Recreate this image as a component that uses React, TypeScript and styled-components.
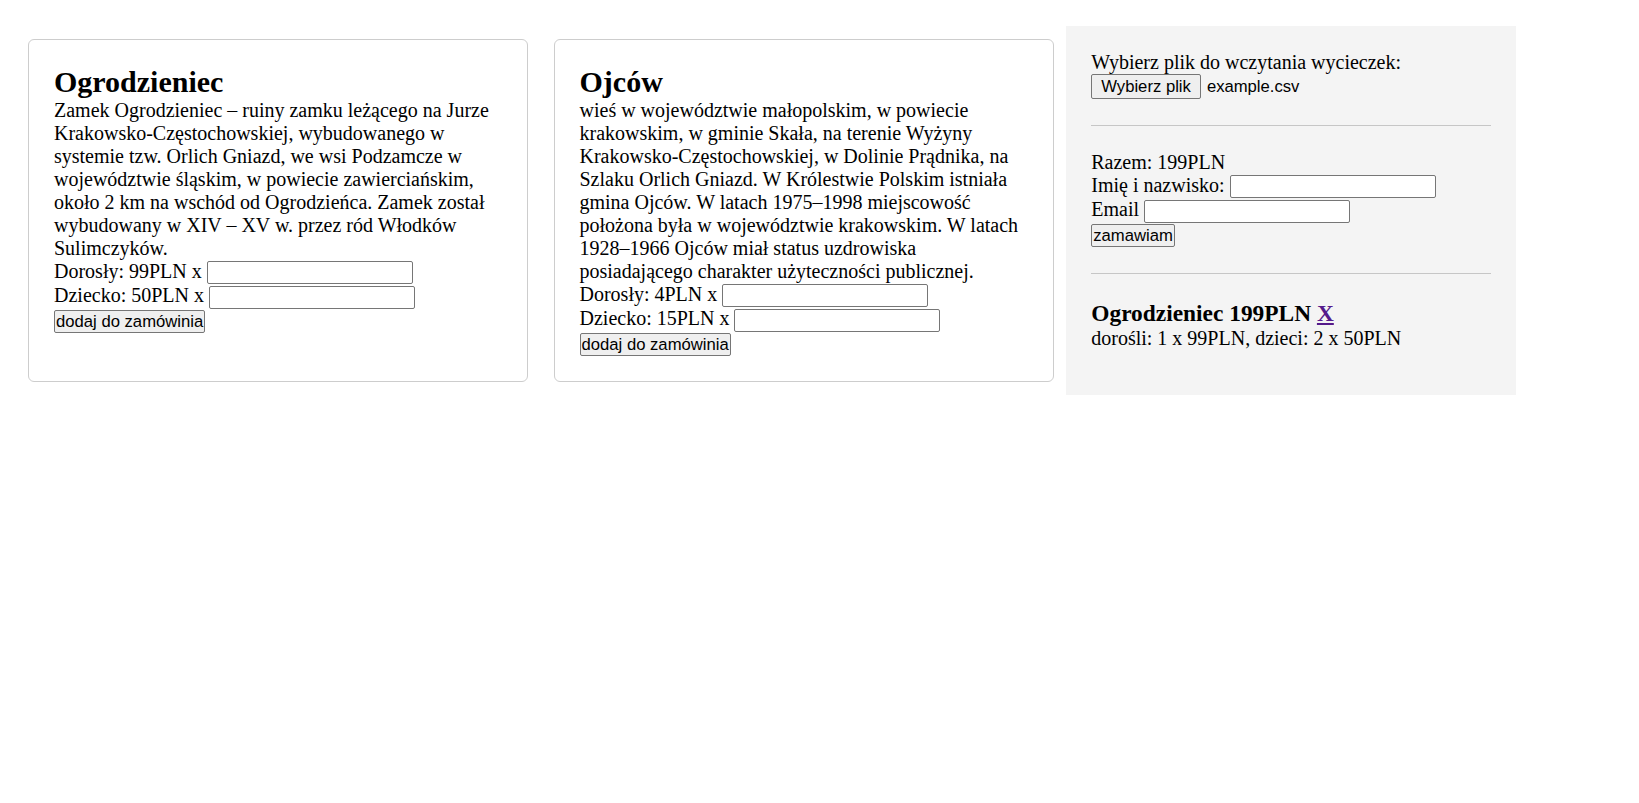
import React from "react";
import styled, { createGlobalStyle } from "styled-components";

const Global = createGlobalStyle`
  html, body { margin: 0; padding: 0; background: #fff; }
  body {
    font-family: "Liberation Serif", "Times New Roman", serif;
    font-size: 20px;
    color: #000;
  }
`;

const Page = styled.div`
  display: flex;
  align-items: stretch;
  padding: 26px 0 0 15.25px;
`;

const Card = styled.section`
  box-sizing: border-box;
  width: 500px;
  margin: 12.75px;
  padding: 25px;
  border: 1px solid #cdcdcd;
  border-radius: 6px;
`;

const Title = styled.h2`
  margin: 0;
  font-size: 30px;
  font-weight: bold;
`;

const Description = styled.p`
  margin: 0;
`;

const Row = styled.div``;

const FormRow = styled.div`
  min-height: 24.6px;
`;

const TextInput = styled.input`
  box-sizing: border-box;
  width: 206px;
  height: 23px;
  padding: 1px 2px;
  border: 1px solid #767676;
  border-radius: 2px;
  background: #fff;
  font: 16.67px "Liberation Sans", Arial, sans-serif;
`;

const Button = styled.button<{ $wide?: boolean }>`
  box-sizing: border-box;
  height: ${(p) => (p.$wide ? "25px" : "23px")};
  padding: ${(p) => (p.$wide ? "0 9px" : "0 1px")};
  border: 1px solid #767676;
  border-radius: 2px;
  background: #efefef;
  color: #000;
  font: 16.67px "Liberation Sans", Arial, sans-serif;
  cursor: pointer;
`;

const Sidebar = styled.aside`
  box-sizing: border-box;
  width: 450px;
  padding: 24.5px 25px 25px;
  background: #f4f4f4;
`;

const FileRow = styled.div`
  display: flex;
  align-items: center;
  gap: 6px;
  height: 26px;
`;

const FileName = styled.span`
  font: 16.67px "Liberation Sans", Arial, sans-serif;
`;

const Divider = styled.hr`
  margin: 25.5px 0 24.5px;
  height: 0;
  border: 0;
  border-top: 1px solid #c6c6c6;
`;

const OrderItem = styled.div`
  padding-top: 2px;
`;

const OrderTitle = styled.h3`
  margin: 0;
  font-size: 23.4px;
  font-weight: bold;
`;

const RemoveLink = styled.a`
  color: #551a8b;
  text-decoration: underline;
`;

type Trip = {
  name: string;
  description: string;
  adult: number;
  child: number;
};

const trips: Trip[] = [
  {
    name: "Ogrodzieniec",
    description:
      "Zamek Ogrodzieniec – ruiny zamku leżącego na Jurze Krakowsko-Częstochowskiej, wybudowanego w systemie tzw. Orlich Gniazd, we wsi Podzamcze w województwie śląskim, w powiecie zawierciańskim, około 2 km na wschód od Ogrodzieńca. Zamek został wybudowany w XIV – XV w. przez ród Włodków Sulimczyków.",
    adult: 99,
    child: 50,
  },
  {
    name: "Ojców",
    description:
      "wieś w województwie małopolskim, w powiecie krakowskim, w gminie Skała, na terenie Wyżyny Krakowsko-Częstochowskiej, w Dolinie Prądnika, na Szlaku Orlich Gniazd. W Królestwie Polskim istniała gmina Ojców. W latach 1975–1998 miejscowość położona była w województwie krakowskim. W latach 1928–1966 Ojców miał status uzdrowiska posiadającego charakter użyteczności publicznej.",
    adult: 4,
    child: 15,
  },
];

export default function App() {
  return (
    <>
      <Global />
      <Page>
        {trips.map((t) => (
          <Card key={t.name}>
            <Title>{t.name}</Title>
            <Description>{t.description}</Description>
            <Row>
              Dorosły: {t.adult}PLN x <TextInput type="number" />
            </Row>
            <Row>
              Dziecko: {t.child}PLN x <TextInput type="number" />
            </Row>
            <Button>dodaj do zamówinia</Button>
          </Card>
        ))}
        <Sidebar>
          <Row>Wybierz plik do wczytania wycieczek:</Row>
          <FileRow>
            <Button $wide>Wybierz plik</Button>
            <FileName>example.csv</FileName>
          </FileRow>
          <Divider />
          <Row>Razem: 199PLN</Row>
          <FormRow>
            Imię i nazwisko: <TextInput type="text" />
          </FormRow>
          <FormRow>
            Email <TextInput type="email" />
          </FormRow>
          <Button>zamawiam</Button>
          <Divider />
          <OrderItem>
            <OrderTitle>
              Ogrodzieniec 199PLN <RemoveLink href="#">X</RemoveLink>
            </OrderTitle>
            <Row>dorośli: 1 x 99PLN, dzieci: 2 x 50PLN</Row>
          </OrderItem>
        </Sidebar>
      </Page>
    </>
  );
}
